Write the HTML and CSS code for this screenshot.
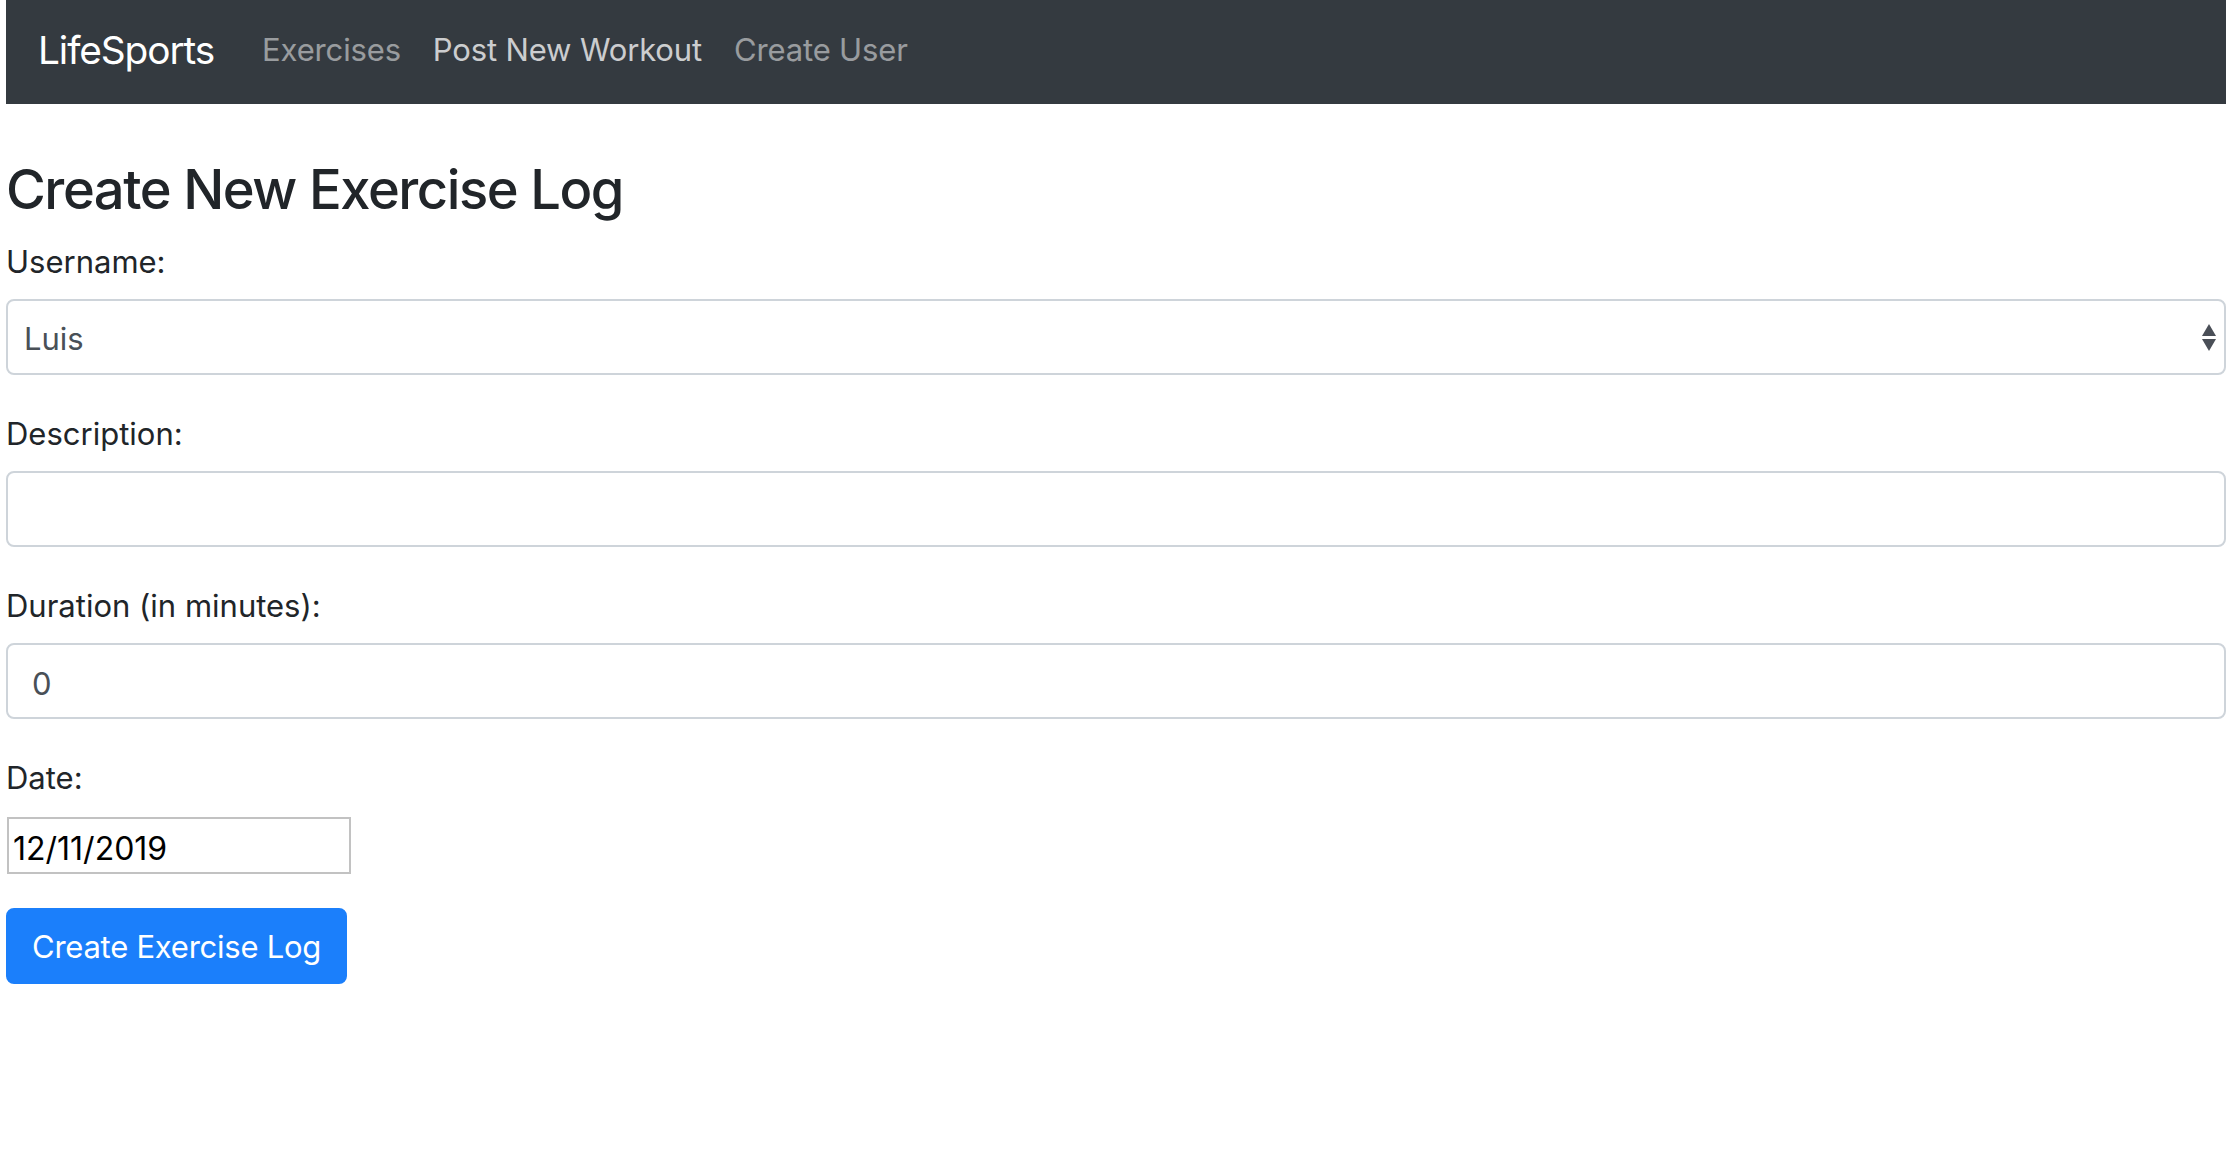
FILE: index.html
```html
<!DOCTYPE html>
<html lang="en">
<head>
<meta charset="utf-8">
<title>LifeSports</title>
<link rel="stylesheet" href="styles.css">
</head>
<body>
<div class="page">
  <nav class="navbar">
    <a class="brand" href="#">LifeSports</a>
    <ul class="nav">
      <li><a class="nav-link" href="#">Exercises</a></li>
      <li><a class="nav-link nav-link-hover" href="#">Post New Workout</a></li>
      <li><a class="nav-link" href="#">Create User</a></li>
    </ul>
  </nav>
  <main class="main">
    <h3 class="title">Create New Exercise Log</h3>
    <form class="form">
      <div class="form-group">
        <label class="label">Username: </label>
        <div class="select-wrap">
          <select class="form-control select"><option>Luis</option></select>
          <svg class="select-arrows" width="14" height="27" viewBox="0 0 14 27"><polygon points="7,0 14,12 0,12"/><polygon points="0,15 14,15 7,27"/></svg>
        </div>
      </div>
      <div class="form-group">
        <label class="label">Description: </label>
        <input class="form-control" type="text" value="">
      </div>
      <div class="form-group">
        <label class="label">Duration (in minutes): </label>
        <input class="form-control" type="text" value="0">
      </div>
      <div class="form-group form-group-date">
        <label class="label">Date: </label>
        <div class="date-wrap">
          <input class="date-input" type="text" value="12/11/2019">
        </div>
      </div>
      <div class="form-group">
        <button class="btn" type="button">Create Exercise Log</button>
      </div>
    </form>
  </main>
</div>
</body>
</html>
```

FILE: styles.css
```css
* { box-sizing: border-box; }
html, body { margin: 0; padding: 0; background: #fff; }
body {
  font-family: Inter, "Noto Sans", "Liberation Sans", sans-serif;
  color: #212529;
  font-size: 31px;
  line-height: 48px;
}
.page {
  width: 2220px;
  margin-left: 6px;
}
.navbar {
  height: 104px;
  background: #343a40;
  display: flex;
  align-items: center;
  padding: 0 32px 4px 32px;
}
.brand {
  font-size: 38.8px;
  letter-spacing: -1.1px;
  line-height: 60px;
  color: #fff;
  text-decoration: none;
  margin-right: 32px;
}
.nav {
  display: flex;
  list-style: none;
  margin: 0;
  padding: 0;
}
.nav-link {
  display: block;
  padding: 0 16px;
  font-size: 31px;
  letter-spacing: -0.15px;
  line-height: 48px;
  color: rgba(255,255,255,.5);
  text-decoration: none;
}
.nav-link-hover { color: rgba(255,255,255,.75); }
.main { padding-top: 52px; }
.title {
  margin: 0 0 12px 0;
  font-size: 54.3px;
  letter-spacing: -1.45px;
  line-height: 67.2px;
  font-weight: 500;
  color: #212529;
}
.form { margin: 0; }
.form-group { margin-bottom: 32px; }
.label {
  display: inline-block;
  padding-top: 3px;
  margin-bottom: 13px;
  color: #212529;
}
.form-control {
  display: block;
  width: 100%;
  height: 76px;
  padding: 14px 24px 10px 24px;
  font-family: inherit;
  font-size: 31px;
  line-height: 48px;
  color: #495057;
  background: #fff;
  border: 2px solid #ced4da;
  border-radius: 8px;
  outline: none;
  margin: 0;
}
.select-wrap { position: relative; }
.select {
  -webkit-appearance: none;
  appearance: none;
  padding-left: 16px;
}
.select-arrows {
  position: absolute;
  right: 10px;
  top: 25px;
  fill: #4a4f57;
}
.date-wrap { padding: 2px 0; }
.date-input {
  display: block;
  width: 344px;
  height: 57px;
  margin: 0 0 0 1px;
  padding: 5px 4px 0 4px;
  font-family: inherit;
  font-size: 32px;
  line-height: 48px;
  color: #000;
  border: 2px solid #c2c2c2;
  border-radius: 0;
  outline: none;
}
.btn {
  display: inline-block;
  height: 76px;
  padding: 13px 24px 11px 24px;
  font-family: inherit;
  font-size: 31px;
  letter-spacing: -0.25px;
  line-height: 48px;
  color: #fff;
  background: #1b7ffb;
  border: 2px solid #1b7ffb;
  border-radius: 8px;
  margin: 0;
}
```
